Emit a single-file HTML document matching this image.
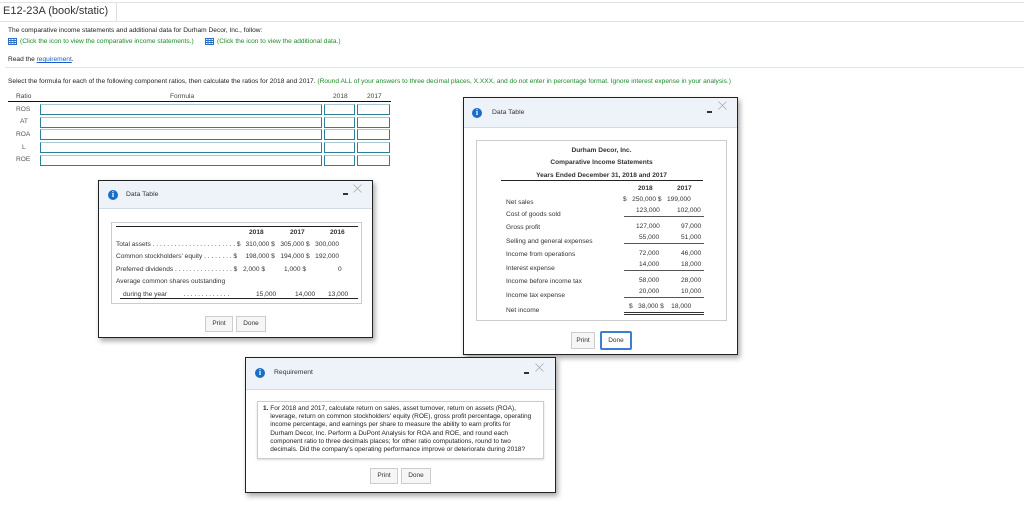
<!DOCTYPE html>
<html><head><meta charset="utf-8"><style>
*{box-sizing:border-box;margin:0;padding:0}
body{width:1024px;height:530px;background:#fff;font-family:"Liberation Sans",Arial,sans-serif;color:#333;position:relative;overflow:hidden;font-size:6.6px}
.a{position:absolute;white-space:nowrap}
.in{position:absolute;border:1px solid #2a7f9a;border-top-color:#aac8d4;background:#fff;height:11px}
.dlg{position:absolute;background:#fff;border:1px solid #222;box-shadow:2px 3px 5px rgba(0,0,0,.35)}
.hd{position:absolute;left:0;right:0;top:0;background:#eef3fa;border-bottom:1px solid #cfdde9}
.ic{position:absolute;width:10px;height:10px;border-radius:50%;background:#1a6ec8;color:#fff;font:bold 8px/10px "Liberation Serif",serif;text-align:center}
.ttl{position:absolute;font-size:6.8px;color:#333}
.mn{position:absolute;width:5px;height:2px;background:#333}
.x{position:absolute}
.box{position:absolute;border:1px solid #ccc}
.btn{position:absolute;border:1px solid #ccc;background:#f6f6f6;font-size:6.5px;text-align:center;color:#333}
.r{text-align:right}
</style></head><body>
<div class="a" style="left:0;top:2px;width:1024px;border-top:1px solid #e2e2e2"></div>
<div class="a" style="left:0;top:21px;width:1024px;border-top:1px solid #dde3ea"></div>
<div class="a" style="left:116px;top:3px;height:18px;border-left:1px solid #ddd"></div>
<div class="a" style="left:3px;top:5px;font-size:11px;color:#333">E12-23A (book/static)</div>
<div class="a" style="left:8px;top:27px;color:#222">The comparative income statements and additional data for Durham Decor, Inc., follow:</div>
<svg class="a" style="left:8px;top:38px" width="9" height="7"><rect x=".5" y=".5" width="8" height="6" fill="#fff" stroke="#2a6fc2"/><path d="M0 2.5H9M0 4.5H9M3 0V7M6 0V7" stroke="#2a6fc2"/></svg>
<div class="a" style="left:20px;top:38px;color:#1d8a2c">(Click the icon to view the comparative income statements.)</div>
<svg class="a" style="left:205px;top:38px" width="9" height="7"><rect x=".5" y=".5" width="8" height="6" fill="#fff" stroke="#2a6fc2"/><path d="M0 2.5H9M0 4.5H9M3 0V7M6 0V7" stroke="#2a6fc2"/></svg>
<div class="a" style="left:217px;top:38px;color:#1d8a2c">(Click the icon to view the additional data.)</div>
<div class="a" style="left:8px;top:56px;color:#222">Read the <span style="color:#1a5dc8;text-decoration:underline">requirement</span>.</div>
<div class="a" style="left:5px;top:67px;width:1019px;border-top:1px solid #e2e6ea"></div>
<div class="a" style="left:8px;top:78px;color:#222">Select the formula for each of the following component ratios, then calculate the ratios for 2018 and 2017. <span style="color:#1d8a2c">(Round ALL of your answers to three decimal places, X.XXX, and do not enter in percentage format. Ignore interest expense in your analysis.)</span></div>
<div class="a" style="left:16px;top:93px;color:#444">Ratio</div>
<div class="a" style="left:170px;top:93px;color:#444">Formula</div>
<div class="a" style="left:333px;top:93px;color:#444">2018</div>
<div class="a" style="left:367px;top:93px;color:#444">2017</div>
<div class="a" style="left:8px;top:101px;width:383px;border-top:1px solid #111"></div>
<div class="a" style="left:16px;top:106px;color:#555">ROS</div>
<div class="a" style="left:20px;top:118px;color:#555">AT</div>
<div class="a" style="left:16px;top:131px;color:#555">ROA</div>
<div class="a" style="left:22px;top:144px;color:#555">L</div>
<div class="a" style="left:16px;top:156px;color:#555">ROE</div>
<div class="in" style="left:40px;top:104px;width:282px"></div><div class="in" style="left:324px;top:104px;width:31px"></div><div class="in" style="left:357px;top:104px;width:33px"></div>
<div class="in" style="left:40px;top:117px;width:282px"></div><div class="in" style="left:324px;top:117px;width:31px"></div><div class="in" style="left:357px;top:117px;width:33px"></div>
<div class="in" style="left:40px;top:129px;width:282px"></div><div class="in" style="left:324px;top:129px;width:31px"></div><div class="in" style="left:357px;top:129px;width:33px"></div>
<div class="in" style="left:40px;top:142px;width:282px"></div><div class="in" style="left:324px;top:142px;width:31px"></div><div class="in" style="left:357px;top:142px;width:33px"></div>
<div class="in" style="left:40px;top:155px;width:282px"></div><div class="in" style="left:324px;top:155px;width:31px"></div><div class="in" style="left:357px;top:155px;width:33px"></div>

<!-- left dialog -->
<div class="dlg" style="left:98px;top:180px;width:275px;height:158px">
 <div class="hd" style="height:28px"></div>
 <div class="ic" style="left:9px;top:9px">i</div>
 <div class="ttl" style="left:27px;top:10px">Data Table</div>
 <div class="mn" style="left:244px;top:12px"></div>
 <svg class="x" style="left:254px;top:3px" width="9" height="9"><path d="M.5 .5L8.5 8.5M8.5 .5L.5 8.5" stroke="#aaa" stroke-width=".8"/></svg>
 <div class="box" style="left:12px;top:41px;width:251px;height:82px"></div>
 <div class="a" style="left:17px;top:45px;width:242px;border-top:1px solid #222"></div>
 <div class="a" style="left:150px;top:48px;font-weight:bold">2018</div>
 <div class="a" style="left:191px;top:48px;font-weight:bold">2017</div>
 <div class="a" style="left:231px;top:48px;font-weight:bold">2016</div>
 <div class="a" style="left:17px;top:60px">Total assets . . . . . . . . . . . . . . . . . . . . . . . $</div>
 <div class="a r" style="left:140px;top:60px;width:100px">310,000 $&nbsp;&nbsp; 305,000 $&nbsp;&nbsp; 300,000</div>
 <div class="a" style="left:17px;top:72px">Common stockholders' equity . . . . . . . . $</div>
 <div class="a r" style="left:140px;top:72px;width:100px">198,000 $&nbsp;&nbsp; 194,000 $&nbsp;&nbsp; 192,000</div>
 <div class="a" style="left:17px;top:85px">Preferred dividends . . . . . . . . . . . . . . . . $</div>
 <div class="a" style="left:144px;top:85px">2,000 $</div><div class="a" style="left:185px;top:85px">1,000 $</div><div class="a" style="left:239px;top:85px">0</div>
 <div class="a" style="left:17px;top:97px">Average common shares outstanding</div>
 <div class="a" style="left:24px;top:110px">during the year&nbsp;&nbsp;&nbsp;&nbsp;&nbsp;&nbsp;&nbsp;&nbsp; . . . . . . . . . . . . .</div>
 <div class="a" style="left:157px;top:110px">15,000</div><div class="a" style="left:196px;top:110px">14,000</div><div class="a" style="left:229px;top:110px">13,000</div>
 <div class="a" style="left:21px;top:117px;width:238px;border-top:1px solid #222"></div>
 <div class="btn" style="left:106px;top:135px;width:28px;height:16px;line-height:14px">Print</div>
 <div class="btn" style="left:137px;top:135px;width:30px;height:16px;line-height:14px">Done</div>
</div>

<!-- right dialog -->
<div class="dlg" style="left:463px;top:97px;width:275px;height:258px">
 <div class="hd" style="height:30px"></div>
 <div class="ic" style="left:8px;top:10px">i</div>
 <div class="ttl" style="left:28px;top:11px">Data Table</div>
 <div class="mn" style="left:243px;top:13px"></div>
 <svg class="x" style="left:254px;top:3px" width="9" height="9"><path d="M.5 .5L8.5 8.5M8.5 .5L.5 8.5" stroke="#aaa" stroke-width=".8"/></svg>
 <div class="box" style="left:12px;top:42px;width:251px;height:181px"></div>
 <div class="a" style="left:12px;top:49px;width:251px;text-align:center;font-weight:bold">Durham Decor, Inc.</div>
 <div class="a" style="left:12px;top:61px;width:251px;text-align:center;font-weight:bold">Comparative Income Statements</div>
 <div class="a" style="left:12px;top:74px;width:251px;text-align:center;font-weight:bold">Years Ended December 31, 2018 and 2017</div>
 <div class="a" style="left:37px;top:82px;width:202px;border-top:1px solid #222"></div>
 <div class="a" style="left:174px;top:87px;font-weight:bold">2018</div>
 <div class="a" style="left:213px;top:87px;font-weight:bold">2017</div>
 <div class="a" style="left:42px;top:101px">Net sales</div><div class="a" style="left:159px;top:98px">$&nbsp;&nbsp; 250,000 $&nbsp;&nbsp; 199,000</div>
 <div class="a" style="left:42px;top:113px">Cost of goods sold</div><div class="a" style="left:172px;top:109px">123,000</div><div class="a" style="left:213px;top:109px">102,000</div>
 <div class="a" style="left:160px;top:118px;width:80px;border-top:1px solid #555"></div>
 <div class="a" style="left:42px;top:126px">Gross profit</div><div class="a" style="left:172px;top:125px">127,000</div><div class="a" style="left:217px;top:125px">97,000</div>
 <div class="a" style="left:42px;top:140px">Selling and general expenses</div><div class="a" style="left:175px;top:136px">55,000</div><div class="a" style="left:217px;top:136px">51,000</div>
 <div class="a" style="left:160px;top:145px;width:80px;border-top:1px solid #555"></div>
 <div class="a" style="left:42px;top:153px">Income from operations</div><div class="a" style="left:175px;top:152px">72,000</div><div class="a" style="left:217px;top:152px">46,000</div>
 <div class="a" style="left:42px;top:167px">Interest expense</div><div class="a" style="left:175px;top:163px">14,000</div><div class="a" style="left:217px;top:163px">18,000</div>
 <div class="a" style="left:160px;top:172px;width:80px;border-top:1px solid #555"></div>
 <div class="a" style="left:42px;top:180px">Income before income tax</div><div class="a" style="left:175px;top:179px">58,000</div><div class="a" style="left:217px;top:179px">28,000</div>
 <div class="a" style="left:42px;top:194px">Income tax expense</div><div class="a" style="left:175px;top:190px">20,000</div><div class="a" style="left:217px;top:190px">10,000</div>
 <div class="a" style="left:160px;top:199px;width:80px;border-top:1px solid #555"></div>
 <div class="a" style="left:42px;top:209px">Net income</div><div class="a" style="left:165px;top:205px">$&nbsp;&nbsp; 38,000 $&nbsp;&nbsp;&nbsp; 18,000</div>
 <div class="a" style="left:160px;top:214px;width:80px;border-top:3px double #333"></div>
 <div class="btn" style="left:107px;top:234px;width:24px;height:17px;line-height:15px">Print</div>
 <div class="btn" style="left:136px;top:233px;width:32px;height:19px;line-height:16px;border:2px solid #3b7fd0;border-radius:2px;background:#fff">Done</div>
</div>

<!-- requirement dialog -->
<div class="dlg" style="left:245px;top:357px;width:311px;height:136px">
 <div class="hd" style="height:32px"></div>
 <div class="ic" style="left:9px;top:10px">i</div>
 <div class="ttl" style="left:28px;top:11px">Requirement</div>
 <div class="mn" style="left:278px;top:14px"></div>
 <svg class="x" style="left:289px;top:5px" width="9" height="9"><path d="M.5 .5L8.5 8.5M8.5 .5L.5 8.5" stroke="#aaa" stroke-width=".8"/></svg>
 <div class="box" style="left:11px;top:43px;width:287px;height:58px;box-shadow:0 1px 2px rgba(0,0,0,.15)"></div>
 <div class="a" style="left:17px;top:47px;line-height:8.2px;color:#222;font-size:6.5px">
 <b>1.</b> For 2018 and 2017, calculate return on sales, asset turnover, return on assets (ROA),<br>
 &nbsp;&nbsp;&nbsp; leverage, return on common stockholders' equity (ROE), gross profit percentage, operating<br>
 &nbsp;&nbsp;&nbsp; income percentage, and earnings per share to measure the ability to earn profits for<br>
 &nbsp;&nbsp;&nbsp; Durham Decor, Inc. Perform a DuPont Analysis for ROA and ROE, and round each<br>
 &nbsp;&nbsp;&nbsp; component ratio to three decimals places; for other ratio computations, round to two<br>
 &nbsp;&nbsp;&nbsp; decimals. Did the company's operating performance improve or deteriorate during 2018?</div>
 <div class="btn" style="left:124px;top:110px;width:28px;height:16px;line-height:14px">Print</div>
 <div class="btn" style="left:155px;top:110px;width:30px;height:16px;line-height:14px">Done</div>
</div>
</body></html>
